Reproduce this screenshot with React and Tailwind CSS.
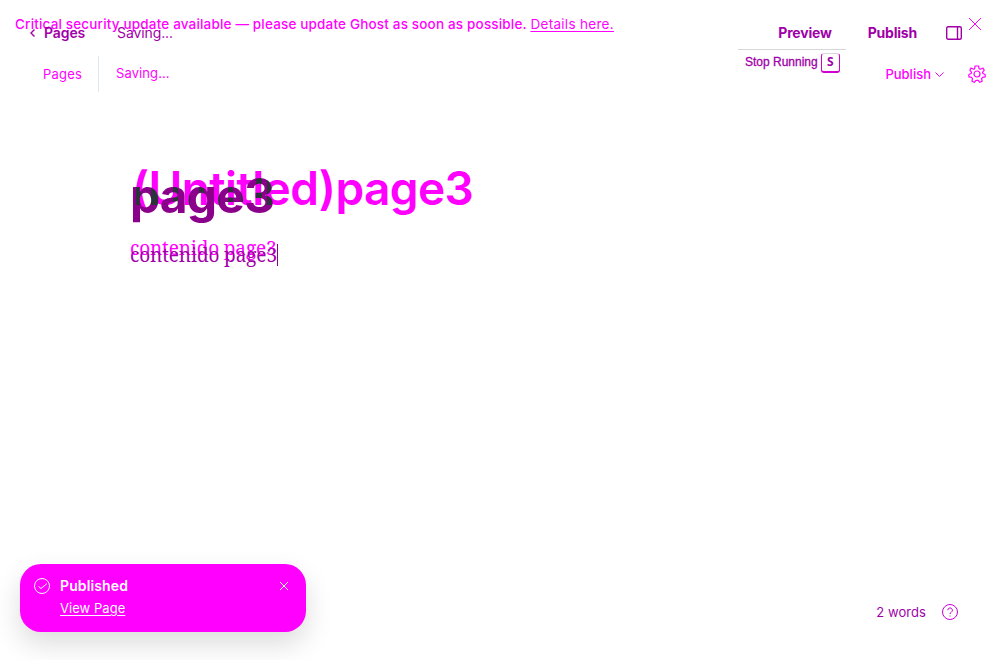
function Close({ size, className }) {
  return (
    <svg width={size} height={size} viewBox="0 0 12 12" fill="none" stroke="currentColor" className={className}>
      <path d="M0 0 12 12M12 0 0 12" vectorEffect="non-scaling-stroke" />
    </svg>
  );
}

function Gear() {
  return (
    <svg width="18" height="18" viewBox="0 0 18 18" fill="none" stroke="currentColor" strokeWidth="1.2" strokeLinejoin="round">
      <path d="M7 1h3.500l.6 2.600 1.300.6L15 3l1.200 2.300-1.600 1.900.3 1.300 2.300 1v2.400l-2.600.5-1 1.300.6 2.600-2.300 1-1.700-2H8l-1.700 2-2.400-1 .6-2.600-1-1.300-2.600-.5V9.500l2.300-1 .3-1.300-1.600-1.900L3 3l2.500 1.200 1.200-.6z" />
      <circle cx="9" cy="9" r="3" />
    </svg>
  );
}

function EarlierEditor() {
  return (
    <div className="absolute inset-0 flex flex-col text-[#ff00ff]">
      <div className="flex h-[48px] items-center justify-between pl-[15px] pr-[19px]">
        <p className="pt-px whitespace-nowrap text-[13.5px] font-medium tracking-[0.170px]">
          Critical security update available — please update Ghost as soon as possible.{" "}
          <a className="font-normal tracking-[0.3px] underline underline-offset-2">Details here.</a>
        </p>
        <Close size={12} />
      </div>
      <header className="flex h-[52px] items-center justify-between pl-[43px] pr-[14px]">
        <div className="flex items-center text-[13px] tracking-[0.2px]">
          <span className="w-[55px] pt-[2px]">Pages</span>
          <span className="h-9 w-px bg-[#dbe9ee]" />
          <span className="pl-[17px] tracking-[0.1px]">Saving...</span>
        </div>
        <div className="flex items-center">
          <span className="pt-px text-[13px] font-medium">Publish</span>
          <svg width="9" height="5" viewBox="0 0 9 5" fill="none" stroke="currentColor" className="ml-1 mr-6">
            <path d="m.5.5 4 4 4-4" />
          </svg>
          <Gear />
        </div>
      </header>
      <main className="pl-[130px] pt-[58px]">
        <h1 className="pl-[2px] text-[46px] font-semibold leading-[60px] tracking-[-0.6px]">(Untitled)page3</h1>
        <p className="mt-[15px] font-['Noto_Serif','Liberation_Serif',serif] text-[19px] leading-[30px] tracking-[-0.150px]">contenido page3</p>
      </main>
    </div>
  );
}

function CurrentEditor() {
  return (
    <div className="absolute inset-0 flex flex-col text-[#a000a8]">
      <header className="flex h-[64px] items-center justify-between pl-[30px] pr-[38px] text-[14px]">
        <div className="flex items-center">
          <svg width="5" height="8" viewBox="0 0 5 8" fill="none" stroke="currentColor" strokeWidth="1.4" className="mr-[9px] mt-[2px]">
            <path d="M4.500.5 1 4l3.500 3.500" />
          </svg>
          <span className="w-[73px] font-semibold tracking-[-0.100px]">Pages</span>
          <span className="tracking-[-0.100px]">Saving...</span>
        </div>
        <div className="flex items-center font-bold tracking-[-0.200px]">
          <span className="mr-9">Preview</span>
          <span className="mr-[29px]">Publish</span>
          <svg width="16" height="14" viewBox="0 0 16 14" fill="none" stroke="currentColor" strokeWidth="1.4" className="mt-px">
            <rect x=".7" y=".7" width="14.600" height="12.600" rx="1.500" />
            <path d="M11.500.5v13" />
          </svg>
        </div>
      </header>
      <main className="pl-[130px] pt-[105px]">
        <h1 className="w-fit bg-[#8b008b] bg-[linear-gradient(90deg,transparent_6px,#2a333a_6px_11px,transparent_11px_21px,#2a333a_21px_28px,transparent_28px_43px,#2a333a_43px_48px,transparent_48px_55px,#2a333a_55px_60px,transparent_60px_69px,#2a333a_69px_74px,transparent_74px_85px,#2a333a_85px_90px,transparent_90px_98px,#2a333a_98px_103px,transparent_103px_111px,#2a333a_111px_116px,transparent_116px_126px,#2a333a_126px_132px,transparent_132px_137px,#2a333a_137px_142px,transparent_142px)] bg-[length:100%_36px] bg-clip-text bg-no-repeat text-[48px] font-bold leading-[54px] tracking-[-0.900px] text-transparent">
          page3
        </h1>
        <p className="mt-[17px] flex items-center font-['Noto_Serif','Liberation_Serif',serif] text-[19px] leading-[30px] tracking-[-0.120px]">
          contenido page3<span className="h-[22px] w-px bg-[#8b008b]" />
        </p>
      </main>
      <div className="absolute left-[738px] top-[49px] flex h-[26px] w-[108px] items-center border-t border-[#d8d8d8] pl-[7px] font-['Liberation_Sans',sans-serif] text-[12px]">
        <span className="-mt-[2px] whitespace-nowrap [-webkit-text-stroke:0.3px_currentColor]">Stop Running</span>
        <kbd className="ml-[3px] flex h-5 w-[19px] items-center justify-center rounded-[3px] border border-b-2 border-[#d000d0] border-t-[#d8d8d8] font-['Noto_Sans',sans-serif] text-[12px] font-bold">S</kbd>
      </div>
      <footer className="mt-auto flex items-center justify-end pb-[38px] pr-[42px] text-[13px]">
        <span className="mr-4 pt-px tracking-[0.080px]">2 words</span>
        <svg width="16" height="16" viewBox="0 0 16 16" fill="none" stroke="#c800d0" className="mt-px">
          <circle cx="8" cy="8" r="7.500" />
          <path d="M5.800 6.200a2.300 2.300 0 1 1 3.500 2C8.400 8.700 8 9 8 10M8 11.500v1" />
        </svg>
      </footer>
    </div>
  );
}

function Toast() {
  return (
    <aside className="absolute left-5 top-[564px] flex h-[68px] w-[286px] items-start rounded-[21px] bg-[#ff00ff] pl-[14px] pr-[18px] pt-[14px] text-white shadow-[0_12px_28px_rgba(0,0,0,0.14)]">
      <svg width="16" height="16" viewBox="0 0 16 16" fill="none" stroke="currentColor" className="mr-[10px]">
        <circle cx="8" cy="8" r="7.500" />
        <path d="m4.500 8.500 2.500 2 6-5" />
      </svg>
      <div className="flex grow flex-col">
        <strong className="-mt-px text-[14px] font-semibold leading-[17px] tracking-[0.120px]">Published</strong>
        <a className="mt-[6px] text-[13px] leading-[17px] tracking-[0.050px] underline underline-offset-2">View Page</a>
      </div>
      <Close size={8} className="mt-1" />
    </aside>
  );
}

export default function App() {
  return (
    <div className="relative h-[660px] w-[1000px] overflow-hidden bg-white font-[Inter,sans-serif]">
      <EarlierEditor />
      <CurrentEditor />
      <Toast />
    </div>
  );
}
